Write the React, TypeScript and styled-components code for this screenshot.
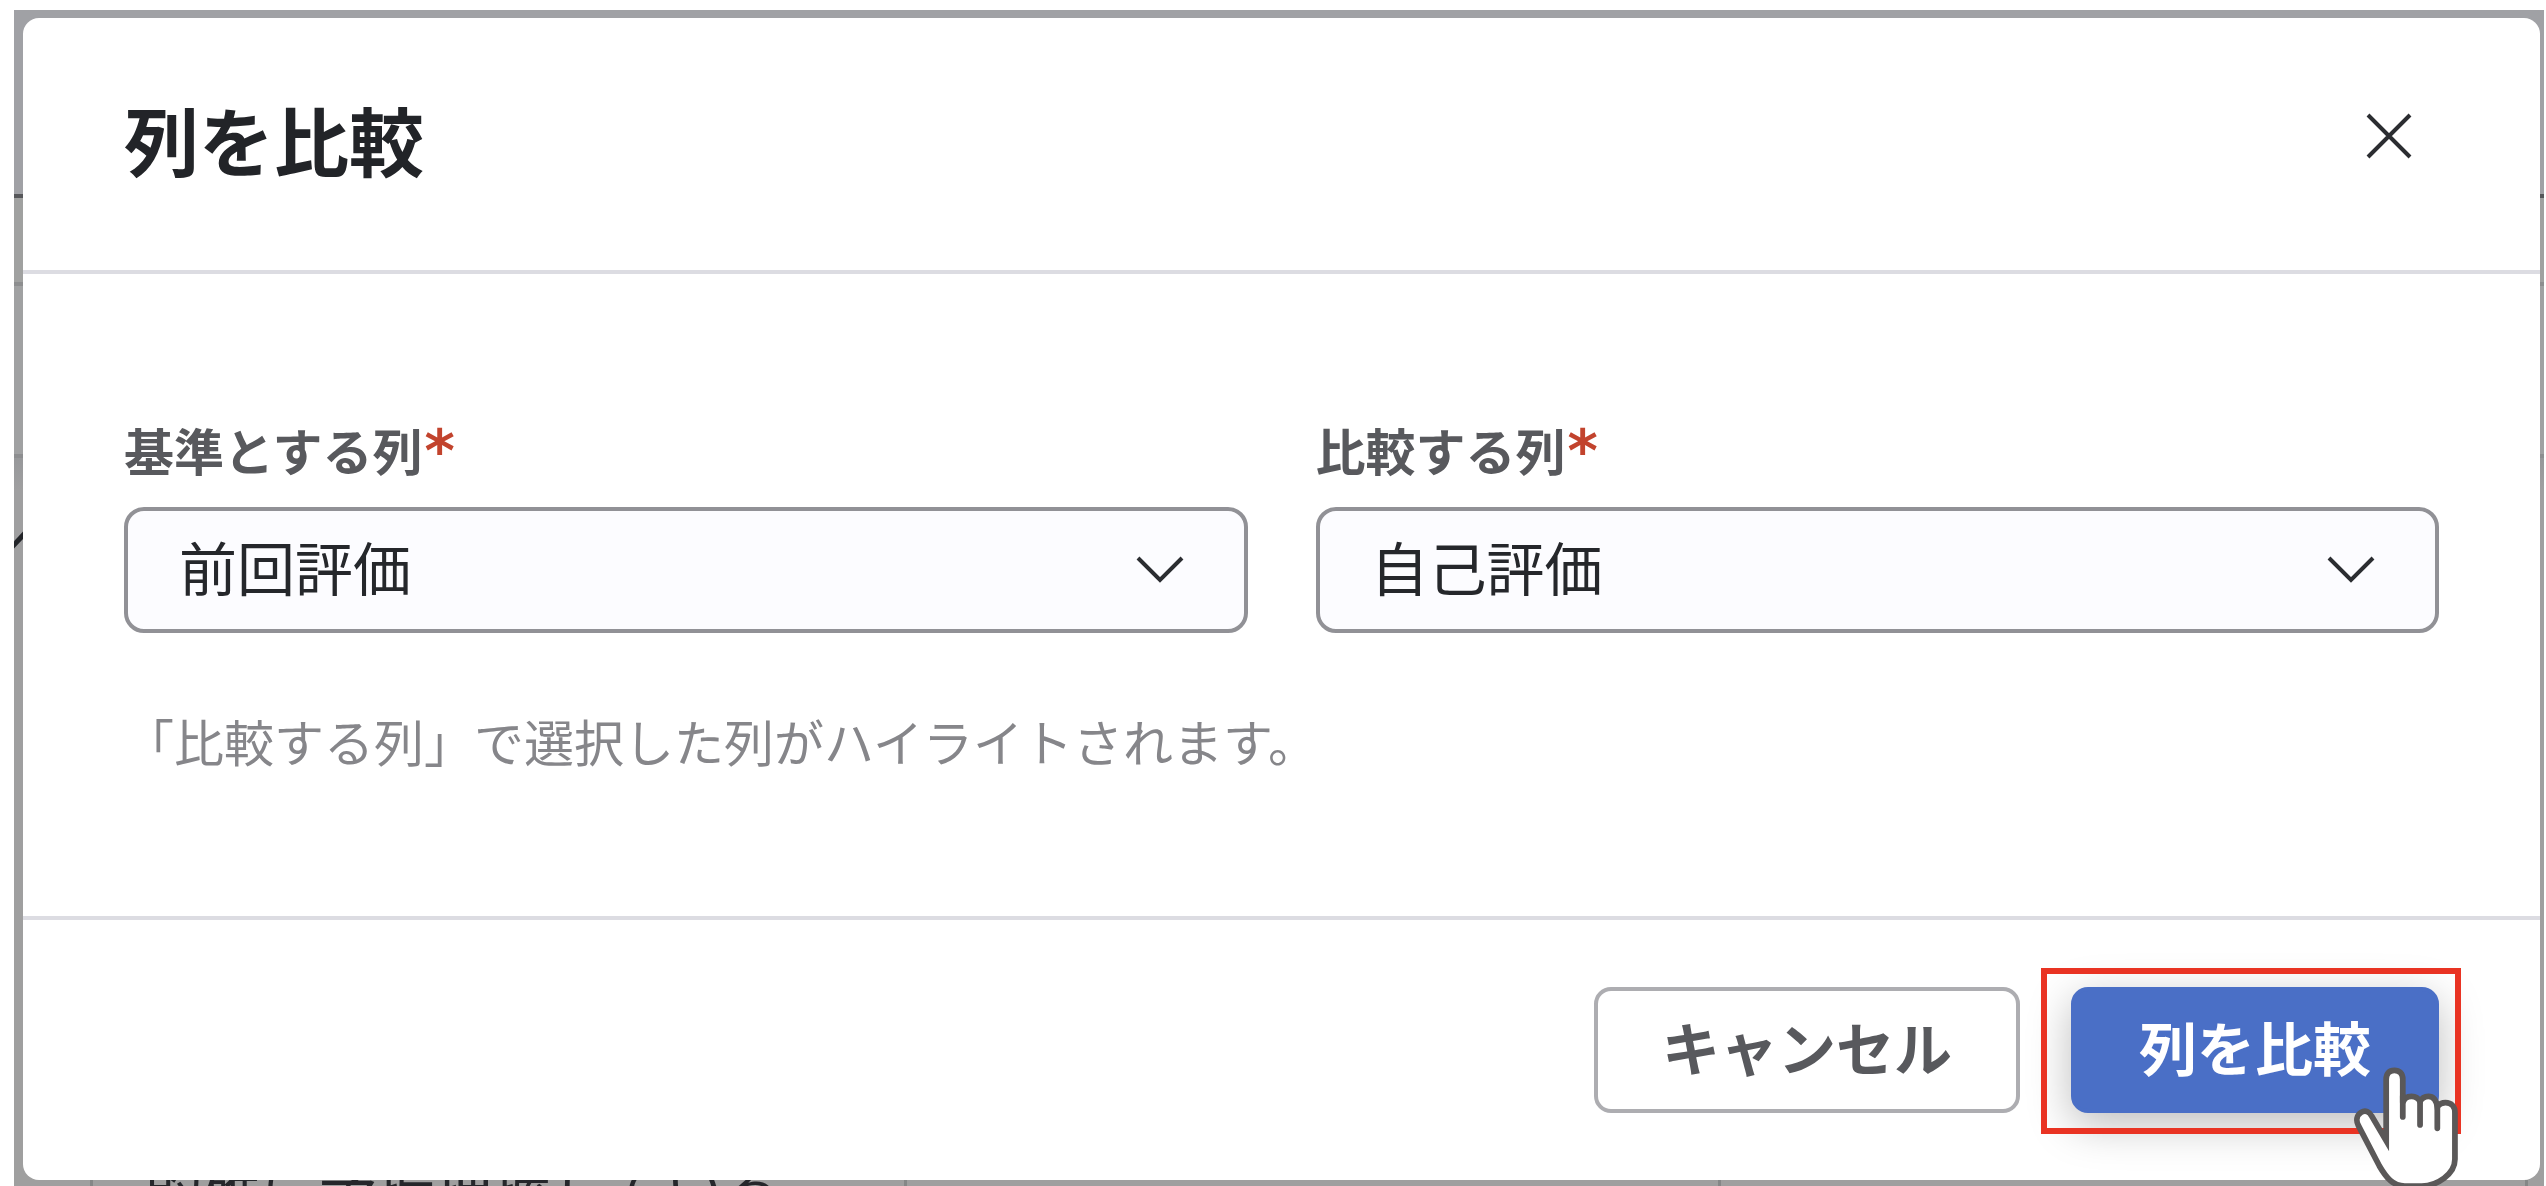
import React from "react";
import styled, { createGlobalStyle } from "styled-components";

const GlobalStyle = createGlobalStyle`
  *, *::before, *::after { box-sizing: border-box; }
  body {
    margin: 0;
    background: #ffffff;
    font-family: "Noto Sans CJK JP", "Noto Sans", sans-serif;
    color: #25272b;
  }
  button, select { font-family: inherit; }
`;

const Page = styled.div`
  height: 100vh;
  padding: 10px 2px 0 14px;
  overflow: hidden;
`;

const Backdrop = styled.div`
  position: relative;
  height: 100%;
  padding: 8px 4px 0 9px;
  overflow: hidden;
  background: linear-gradient(
    #a0a1a5 0 184px,
    #56575a 184px 188px,
    #a0a1a0 188px 272px,
    #8d8e8f 272px 276px,
    #a0a1a2 276px 444px,
    #8d8e90 444px 448px,
    #97989a 448px,
    #9f9fa0 480px,
    #9f9f9f
  );
`;

const EdgeMark = styled.svg`
  position: absolute;
  left: 0;
  top: 520px;
`;

const Dialog = styled.div`
  position: relative;
  border-radius: 16px;
  background: #ffffff;
`;

const Header = styled.header`
  display: flex;
  align-items: flex-start;
  justify-content: space-between;
  padding: 68px 101px 70px;
  border-bottom: 4px solid #dcdce2;
`;

const Title = styled.h1`
  margin: 0;
  font-size: 75px;
  line-height: 106px;
  font-weight: 700;
  color: #222428;
`;

const CloseButton = styled.button`
  display: grid;
  place-items: center;
  width: 100px;
  height: 100px;
  margin-bottom: 14px;
  padding: 0;
  border: 0;
  background: transparent;
  color: #2b2d31;
`;

const Body = styled.div`
  padding: 145px 101px 146px;
`;

const Fields = styled.div`
  display: grid;
  grid-template-columns: 1fr 1fr;
  gap: 68px;
`;

const Field = styled.div`
  display: flex;
  flex-direction: column;
  gap: 28px;
`;

const Label = styled.label`
  height: 60px;
  font-size: 50px;
  line-height: 60px;
  font-weight: 700;
  color: #58595d;
`;

const Required = styled.span`
  margin-left: 2px;
  font-family: "DejaVu Sans", sans-serif;
  font-size: 58px;
  line-height: 0;
  font-weight: 700;
  color: #c2432d;
`;

const SelectBox = styled.div`
  position: relative;
  display: grid;
`;

const Select = styled.select`
  appearance: none;
  height: 126px;
  padding: 0 140px 8px 51px;
  border: 4px solid #919196;
  border-radius: 20px;
  background: #fcfcff;
  color: #25272b;
  font-size: 58px;
`;

const Chevron = styled.svg`
  position: absolute;
  right: 62px;
  top: 48px;
  pointer-events: none;
`;

const Help = styled.p`
  margin: 77px 0 0;
  font-size: 50px;
  line-height: 60px;
  font-weight: 400;
  color: #86868a;
`;

const Footer = styled.footer`
  display: flex;
  justify-content: flex-end;
  gap: 51px;
  padding: 67px 101px;
  border-top: 4px solid #dcdce2;
`;

const Button = styled.button<{ $primary?: boolean }>`
  height: 126px;
  padding: 0 64px 8px;
  border: 4px solid ${(p) => (p.$primary ? "#4a6fc6" : "#adadb1")};
  border-radius: 17px;
  background: ${(p) => (p.$primary ? "#4a6fc6" : "#ffffff")};
  box-shadow: ${(p) => (p.$primary ? "0 12px 44px rgba(0, 0, 0, 0.26)" : "none")};
  color: ${(p) => (p.$primary ? "#ffffff" : "#58595d")};
  font-size: 58px;
  font-weight: 700;
  white-space: nowrap;
`;

const Callout = styled.div`
  position: relative;
  display: flex;
`;

const Highlight = styled.span`
  position: absolute;
  inset: -19px -22px -21px -30px;
  border: 6px solid #e93323;
  pointer-events: none;
`;

const Hand = styled.svg`
  position: absolute;
  right: -20px;
  top: 79px;
  pointer-events: none;
`;

const TableRow = styled.div`
  display: grid;
  grid-template-columns: 70px 814px 814px 807px 1fr;
  grid-template-rows: 6px;
`;

const Cell = styled.div`
  display: flex;
  align-items: center;
  padding-left: 52px;
  border-right: 3px solid #858787;
  font-size: 58px;
  line-height: 58px;
  white-space: nowrap;
`;

type ColumnFieldProps = { id: string; label: string; value: string };

function ColumnField({ id, label, value }: ColumnFieldProps) {
  return (
    <Field>
      <Label htmlFor={id}>
        {label}
        <Required>*</Required>
      </Label>
      <SelectBox>
        <Select id={id} defaultValue={value} required>
          <option>{value}</option>
        </Select>
        <Chevron width="52" height="30" viewBox="0 0 52 30" fill="none" stroke="#2b2d31" strokeWidth="4" aria-hidden="true">
          <path d="M4 3 26 25 48 3" />
        </Chevron>
      </SelectBox>
    </Field>
  );
}

export default function App() {
  return (
    <>
      <GlobalStyle />
      <Page>
        <Backdrop>
          <EdgeMark width="9" height="20" viewBox="0 0 9 20" stroke="#222428" strokeWidth="5" aria-hidden="true">
            <path d="M-2 17 12 2" />
          </EdgeMark>
          <Dialog role="dialog" aria-labelledby="dialog-title">
            <Header>
              <Title id="dialog-title">列を比較</Title>
              <CloseButton type="button" aria-label="閉じる">
                <svg width="46" height="46" viewBox="0 0 46 46" fill="none" stroke="currentColor" strokeWidth="4" aria-hidden="true">
                  <path d="M2 2 44 44M44 2 2 44" />
                </svg>
              </CloseButton>
            </Header>
            <Body>
              <Fields>
                <ColumnField id="base-column" label="基準とする列" value="前回評価" />
                <ColumnField id="compare-column" label="比較する列" value="自己評価" />
              </Fields>
              <Help>「比較する列」で選択した列がハイライトされます。</Help>
            </Body>
            <Footer>
              <Button type="button">キャンセル</Button>
              <Callout>
                <Button type="button" $primary>
                  列を比較
                </Button>
                <Highlight />
                <Hand
                  width="105"
                  height="124"
                  viewBox="1000 390 310 372"
                  preserveAspectRatio="none"
                  fill="#ffffff"
                  stroke="#5a5858"
                  strokeWidth="17"
                  strokeLinecap="round"
                  aria-hidden="true"
                >
                  <path d="M1095 614V430C1095 412 1104 403 1119 403S1144 412 1144 430V500C1148 486 1158 481 1170 481S1190 486 1195 497C1200 486 1209 481 1220 481S1242 488 1246 512C1252 504 1260 500 1270 500C1288 500 1298 512 1298 530V670C1298 715 1245 750 1200 750H1150C1115 750 1095 725 1075 690L1013 569C1005 553 1008 537 1021 529S1046 528 1052 540Z" />
                  <path d="M1144 480V543M1195 497V567M1246 505V577" fill="none" />
                </Hand>
              </Callout>
            </Footer>
          </Dialog>
          <TableRow aria-hidden="true">
            <Cell />
            <Cell>的確に予振把握している</Cell>
            <Cell />
            <Cell />
          </TableRow>
        </Backdrop>
      </Page>
    </>
  );
}
